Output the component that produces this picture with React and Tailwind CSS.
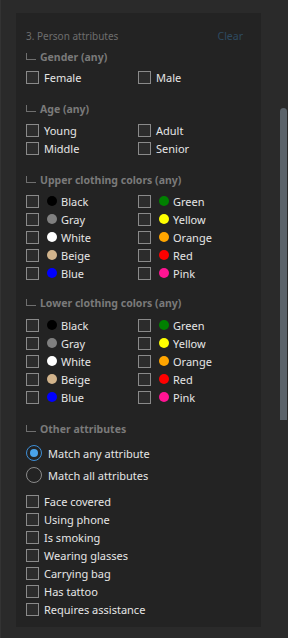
import React from "react";

const font = { fontFamily: '"Noto Sans", "Open Sans", sans-serif' };

function Box() {
  return <span className="block w-[13px] h-[13px] shrink-0 border border-[#8a8a8a] bg-[#2c2c2c]" />;
}

function Check({ label, dot }) {
  return (
    <div className="flex items-center h-[18px]">
      <Box />
      {dot ? (
        <>
          <span className="ml-[8px] w-[10px] h-[10px] rounded-full shrink-0" style={{ background: dot }} />
          <span className="ml-[4px] text-[11px] text-[#e6e6e6] leading-none">{label}</span>
        </>
      ) : (
        <span className="ml-[5px] text-[11px] text-[#e6e6e6] leading-none">{label}</span>
      )}
    </div>
  );
}

function Header({ children }) {
  return (
    <div className="flex items-center h-[14px]">
      <span className="block w-[10px] h-[7px] border-l border-b border-[#6f6f6f] mb-[2px]" />
      <span className="ml-[4px] text-[10.5px] font-bold text-[#7a7a7a] leading-none">{children}</span>
    </div>
  );
}

function Grid({ items }) {
  return (
    <div className="grid grid-cols-[112px_1fr]">
      {items.map((it) => (
        <Check key={it[0]} label={it[0]} dot={it[1]} />
      ))}
    </div>
  );
}

const colors = [
  ["Black", "#000000"],
  ["Green", "#008000"],
  ["Gray", "#808080"],
  ["Yellow", "#ffff00"],
  ["White", "#ffffff"],
  ["Orange", "#ffa500"],
  ["Beige", "#d2b48c"],
  ["Red", "#ff0000"],
  ["Blue", "#0000ff"],
  ["Pink", "#ff1493"],
];

function Radio({ label, selected }) {
  return (
    <div className="flex items-center h-[22px]">
      {selected ? (
        <span className="flex items-center justify-center w-[16px] h-[16px] rounded-full border-[1.5px] border-[#3d8ed6] shrink-0">
          <span className="block w-[8px] h-[8px] rounded-full bg-[#4aa3ea]" />
        </span>
      ) : (
        <span className="block w-[16px] h-[16px] rounded-full border-[1.5px] border-[#8a8a8a] shrink-0" />
      )}
      <span className="ml-[6px] text-[11px] text-[#e6e6e6] leading-none">{label}</span>
    </div>
  );
}

export default function App() {
  return (
    <div className="relative w-[288px] h-[638px] bg-[#2a2a2a] border-l border-[#333] overflow-hidden" style={font}>
      <div className="ml-[15px] mt-[13px] w-[245px] h-[614px] bg-[#232323] px-[10px] pt-[15px] flex flex-col">
        <div className="flex items-center justify-between h-[16px] mb-[6px]">
          <span className="text-[10px] text-[#6e6e6e] leading-none">3. Person attributes</span>
          <span className="text-[10.5px] text-[#2e4a60] leading-none mr-[8px]">Clear</span>
        </div>
        <Header>Gender (any)</Header>
        <div className="mt-[4px]">
          <Grid items={[["Female"], ["Male"]]} />
        </div>
        <div className="mt-[16px]">
          <Header>Age (any)</Header>
        </div>
        <div className="mt-[5px]">
          <Grid items={[["Young"], ["Adult"], ["Middle"], ["Senior"]]} />
        </div>
        <div className="mt-[16px]">
          <Header>Upper clothing colors (any)</Header>
        </div>
        <div className="mt-[5px]">
          <Grid items={colors} />
        </div>
        <div className="mt-[14px]">
          <Header>Lower clothing colors (any)</Header>
        </div>
        <div className="mt-[6px]">
          <Grid items={colors} />
        </div>
        <div className="mt-[16px]">
          <Header>Other attributes</Header>
        </div>
        <div className="mt-[6px]">
          <Radio label="Match any attribute" selected />
          <Radio label="Match all attributes" />
        </div>
        <div className="mt-[6px]">
          {["Face covered", "Using phone", "Is smoking", "Wearing glasses", "Carrying bag", "Has tattoo", "Requires assistance"].map((l) => (
            <Check key={l} label={l} />
          ))}
        </div>
      </div>
      <div className="absolute left-[279px] top-[108px] w-[7px] h-[312px] rounded-t-full rounded-b-[2px] bg-[#5b636a]" />
    </div>
  );
}
